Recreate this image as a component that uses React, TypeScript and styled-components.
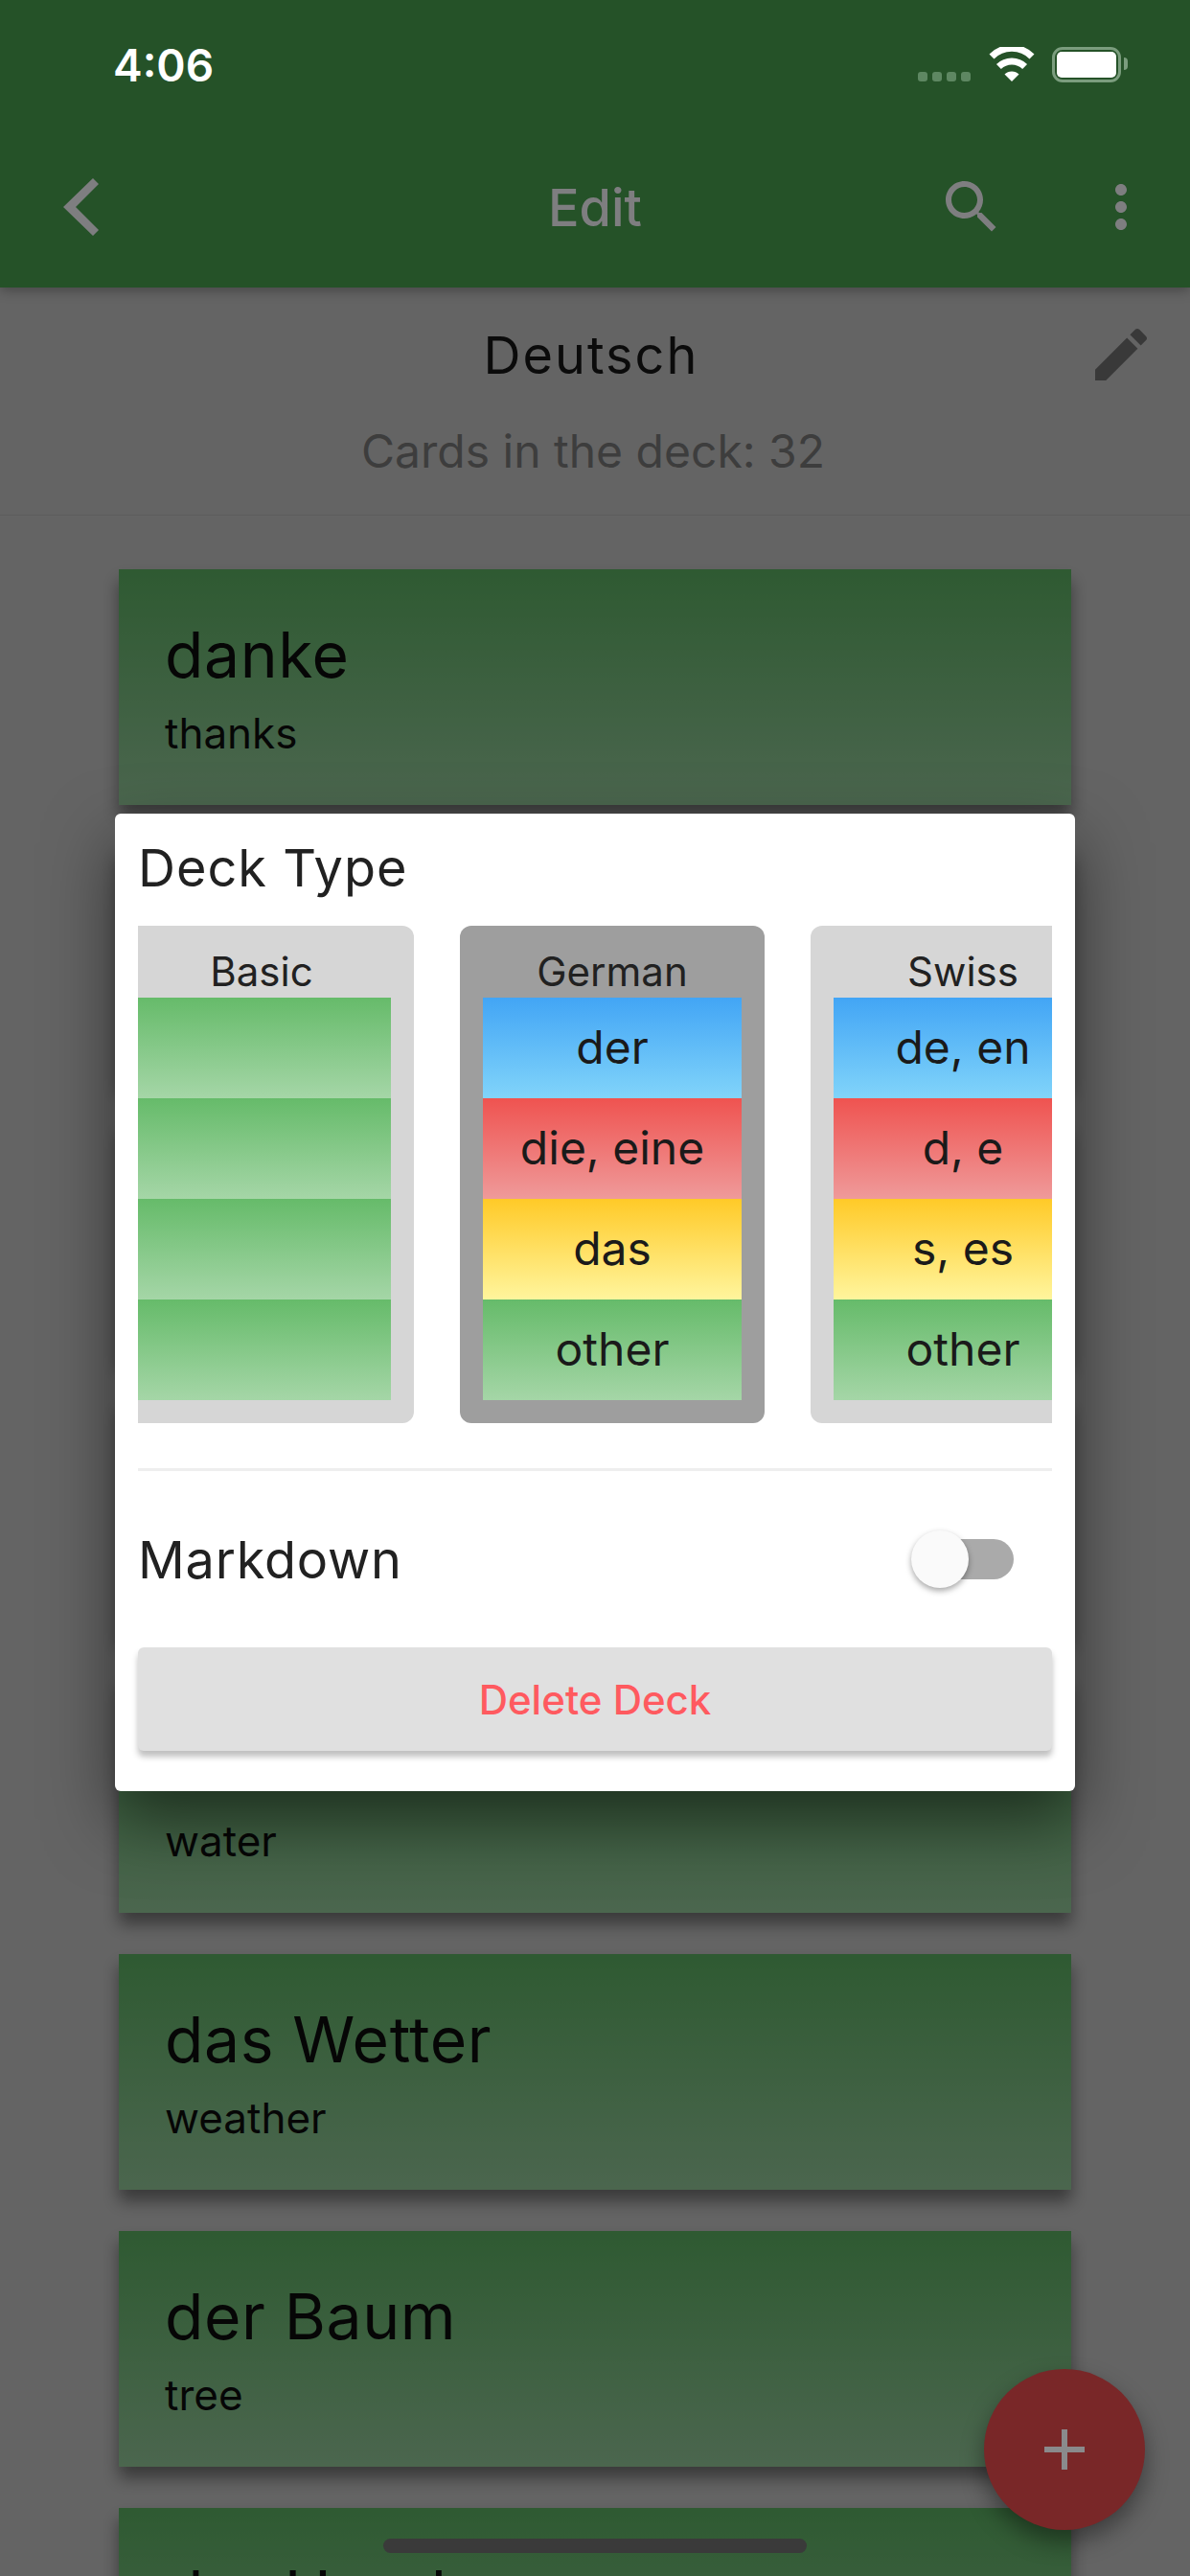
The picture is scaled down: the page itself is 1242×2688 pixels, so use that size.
import React from "react";
import styled, { createGlobalStyle } from "styled-components";

const GlobalStyle = createGlobalStyle`
  html, body {
    margin: 0;
    padding: 0;
    background: #646464;
  }
  body {
    font-family: Inter, "Noto Sans", "Liberation Sans", sans-serif;
    color: #111;
  }
`;

const bandColors = {
  blue: "linear-gradient(#42a5f5, #81d4fa)",
  red: "linear-gradient(#ef5350, #ef9a9a)",
  yellow: "linear-gradient(#ffca28, #fff59d)",
  green: "linear-gradient(#66bb6a, #a5d6a7)",
};

type Tone = keyof typeof bandColors;

const deckTypes: {
  name: string;
  selected?: boolean;
  bands: { tone: Tone; label?: string }[];
}[] = [
  {
    name: "Basic",
    bands: [{ tone: "green" }, { tone: "green" }, { tone: "green" }, { tone: "green" }],
  },
  {
    name: "German",
    selected: true,
    bands: [
      { tone: "blue", label: "der" },
      { tone: "red", label: "die, eine" },
      { tone: "yellow", label: "das" },
      { tone: "green", label: "other" },
    ],
  },
  {
    name: "Swiss",
    bands: [
      { tone: "blue", label: "de, en" },
      { tone: "red", label: "d, e" },
      { tone: "yellow", label: "s, es" },
      { tone: "green", label: "other" },
    ],
  },
];

// cards 2-4 sit fully behind the dialog
const cards: { word?: string; meaning?: string }[] = [
  { word: "danke", meaning: "thanks" },
  {},
  {},
  {},
  { meaning: "water" },
  { word: "das Wetter", meaning: "weather" },
  { word: "der Baum", meaning: "tree" },
  { word: "der Hund" },
];

const App: React.FunctionComponent = () => {
  return (
    <Screen>
      <GlobalStyle />
      <AppBar>
        <StatusBar>
          <Clock>4:06</Clock>
          <StatusIcons>
            <SignalDots>
              <SignalDot />
              <SignalDot />
              <SignalDot />
              <SignalDot />
            </SignalDots>
            <svg width="48" height="36" viewBox="0 0 48 36">
              <path d="M3 13.5A29.5 29.5 0 0 1 45 13.5" fill="none" stroke="#fff" strokeWidth="7" transform="translate(0 -3.5)" />
              <path d="M10.4 21.6A19.5 19.5 0 0 1 37.6 21.6" fill="none" stroke="#fff" strokeWidth="7" transform="translate(0 -1)" />
              <path d="M16.5 28.5A10.6 10.6 0 0 1 31.5 28.5L24 36Z" fill="#fff" />
            </svg>
            <Battery>
              <BatteryFill />
            </Battery>
          </StatusIcons>
        </StatusBar>
        <Toolbar>
          <BackButton>
            <svg width="37" height="60" viewBox="0 0 37 60">
              <path d="M31 0L37 6L13 30L37 54L31 60L0 30Z" fill="#7e7e80" />
            </svg>
          </BackButton>
          <BarTitle>Edit</BarTitle>
          <BarActions>
            <svg width="72" height="72" viewBox="0 0 24 24" fill="#7e7e80">
              <path d="M15.5 14h-.79l-.28-.27C15.41 12.59 16 11.11 16 9.5 16 5.91 13.09 3 9.5 3S3 5.91 3 9.5 5.91 16 9.5 16c1.61 0 3.09-.59 4.23-1.57l.27.28v.79l5 4.99L20.49 19l-4.99-5zm-6 0C7.01 14 5 11.99 5 9.5S7.01 5 9.5 5 14 7.01 14 9.5 11.99 14 9.5 14z" />
            </svg>
            <svg width="72" height="72" viewBox="0 0 24 24" fill="#7e7e80">
              <path d="M12 8c1.1 0 2-.9 2-2s-.9-2-2-2-2 .9-2 2 .9 2 2 2zm0 2c-1.1 0-2 .9-2 2s.9 2 2 2 2-.9 2-2-.9-2-2-2zm0 6c-1.1 0-2 .9-2 2s.9 2 2 2 2-.9 2-2-.9-2-2-2z" />
            </svg>
          </BarActions>
        </Toolbar>
      </AppBar>

      <Body>
        <DeckHeader>
          <DeckTitleRow>
            <DeckName>Deutsch</DeckName>
            <PencilSlot>
              <svg width="72" height="72" viewBox="0 0 24 24" fill="#8f8f8f">
                <path d="M3 17.25V21h3.75L17.81 9.94l-3.75-3.75L3 17.25zM20.71 7.04c.39-.39.39-1.02 0-1.41l-2.34-2.34c-.39-.39-1.02-.39-1.41 0l-1.83 1.83 3.75 3.75 1.83-1.83z" />
              </svg>
            </PencilSlot>
          </DeckTitleRow>
          <DeckCount>Cards in the deck: 32</DeckCount>
        </DeckHeader>
        <CardList>
          {cards.map((card, i) => (
            <WordCard key={i}>
              <Word>{card.word}</Word>
              <Meaning>{card.meaning}</Meaning>
            </WordCard>
          ))}
        </CardList>

        <Scrim>
          <Dialog>
            <DialogTitle>Deck Type</DialogTitle>
            <Carousel>
              <CarouselTrack>
                {deckTypes.map((type) => (
                  <TypeCard key={type.name} $selected={type.selected}>
                    <TypeName>{type.name}</TypeName>
                    <Bands>
                      {type.bands.map((band, i) => (
                        <Band key={i} $tone={band.tone}>
                          {band.label}
                        </Band>
                      ))}
                    </Bands>
                  </TypeCard>
                ))}
              </CarouselTrack>
            </Carousel>
            <Divider />
            <SettingRow>
              <SettingLabel>Markdown</SettingLabel>
              <SwitchTrack>
                <SwitchThumb />
              </SwitchTrack>
            </SettingRow>
            <DeleteButton>Delete Deck</DeleteButton>
          </Dialog>
        </Scrim>
      </Body>

      <Fab>
        <svg width="42" height="42" viewBox="0 0 42 42" fill="#8a8a8c">
          <path d="M18 0h6v18h18v6H24v18h-6V24H0v-6h18z" />
        </svg>
      </Fab>
      <HomeIndicator />
    </Screen>
  );
};
export default App;

const Screen = styled.main`
  position: relative;
  display: flex;
  flex-direction: column;
  width: 1242px;
  height: 2688px;
  overflow: hidden;
  background: #fafafa;
`;

const AppBar = styled.header`
  position: relative;
  z-index: 2;
  display: flex;
  flex-direction: column;
  height: 300px;
  background: #255228;
  box-shadow: 0 3px 12px rgba(0, 0, 0, 0.3);
`;
const StatusBar = styled.div`
  display: flex;
  align-items: flex-start;
  justify-content: space-between;
  height: 132px;
  padding: 40px 72px 0 118px;
  box-sizing: border-box;
`;
const Clock = styled.span`
  font-size: 46px;
  line-height: 56px;
  font-weight: 600;
  color: #fff;
`;
const StatusIcons = styled.div`
  display: flex;
  align-items: flex-start;
  gap: 18px;
  padding-top: 9px;
`;
const SignalDots = styled.div`
  display: flex;
  gap: 5px;
  padding-top: 26px;
  margin-right: 1px;
`;
const SignalDot = styled.i`
  display: block;
  width: 10px;
  height: 10px;
  border-radius: 3px;
  background: #5e8762;
`;
const Battery = styled.div`
  position: relative;
  width: 72px;
  height: 37px;
  padding: 5px;
  box-sizing: border-box;
  border: 3px solid #7b9d7e;
  border-radius: 11px;
  &::after {
    content: "";
    position: absolute;
    top: 8px;
    right: -10px;
    width: 4px;
    height: 13px;
    background: #7b9d7e;
    border-radius: 0 4px 4px 0;
  }
`;
const BatteryFill = styled.div`
  width: 100%;
  height: 100%;
  margin: -3px;
  padding: 3px;
  box-sizing: content-box;
  background: #fff;
  border-radius: 5px;
`;

const Toolbar = styled.div`
  display: grid;
  grid-template-columns: 1fr auto 1fr;
  align-items: center;
  height: 168px;
  padding: 0 36px 0 66px;
`;
const BackButton = styled.div`
  display: flex;
`;
const BarTitle = styled.h1`
  margin: 0;
  font-size: 54px;
  font-weight: 500;
  color: #7e7e80;
  transform: translateX(-15px);
`;
const BarActions = styled.div`
  display: flex;
  justify-content: flex-end;
  gap: 84px;
`;

const Body = styled.div`
  position: relative;
  flex: 1;
  min-height: 0;
`;
const DeckHeader = styled.section`
  display: flex;
  flex-direction: column;
  align-items: center;
  height: 238px;
  box-sizing: border-box;
  border-bottom: 1px solid #e6e6e6;
`;
const DeckTitleRow = styled.div`
  display: grid;
  grid-template-columns: 1fr auto 1fr;
  align-items: center;
  width: 100%;
  height: 72px;
  margin-top: 34px;
  padding: 0 36px 0 28px;
  box-sizing: border-box;
`;
const DeckName = styled.h2`
  grid-column: 2;
  margin: 0;
  font-size: 54px;
  font-weight: 400;
  letter-spacing: 2px;
  color: #1c1c1c;
`;
const PencilSlot = styled.div`
  display: flex;
  justify-content: flex-end;
`;
const DeckCount = styled.p`
  margin: 37px 0 0 -4px;
  font-size: 48px;
  line-height: 56px;
  color: #999;
`;

const CardList = styled.section`
  display: flex;
  flex-direction: column;
  gap: 43px;
  padding: 56px 124px 0;
`;
const WordCard = styled.article`
  flex: none;
  height: 246px;
  padding: 51px 48px 0;
  box-sizing: border-box;
  background: linear-gradient(#75e17d, #bcffc4);
  box-shadow: 0 12px 16px rgba(0, 0, 0, 0.42);
`;
const Word = styled.div`
  height: 76px;
  font-size: 66px;
  line-height: 76px;
  letter-spacing: 0.6px;
  color: #111;
`;
const Meaning = styled.div`
  margin-top: 19px;
  font-size: 44px;
  line-height: 50px;
  color: #111;
`;

const Scrim = styled.div`
  position: absolute;
  inset: 0;
  z-index: 1;
  display: flex;
  justify-content: center;
  align-items: flex-start;
  padding-top: 549px;
  background: rgba(0, 0, 0, 0.6);
`;
const Dialog = styled.div`
  display: flex;
  flex-direction: column;
  width: 1002px;
  height: 1020px;
  padding: 24px;
  box-sizing: border-box;
  background: #fff;
  border-radius: 6px;
  box-shadow: 0 30px 70px rgba(0, 0, 0, 0.5);
`;
const DialogTitle = styled.h3`
  margin: 0;
  font-size: 54px;
  line-height: 66px;
  font-weight: 400;
  letter-spacing: 1px;
  color: #212121;
`;
const Carousel = styled.div`
  margin-top: 27px;
  overflow: hidden;
`;
const CarouselTrack = styled.div`
  display: flex;
  gap: 48px;
  margin-left: -30px;
`;
const TypeCard = styled.div<{ $selected?: boolean }>`
  flex: none;
  display: flex;
  flex-direction: column;
  width: 318px;
  height: 519px;
  padding: 0 24px 24px;
  box-sizing: border-box;
  background: ${(p) => (p.$selected ? "#9e9e9e" : "#d6d6d6")};
  border-radius: 12px;
`;
const TypeName = styled.div`
  height: 75px;
  padding-top: 23px;
  box-sizing: border-box;
  font-size: 42px;
  line-height: 50px;
  text-align: center;
  color: #212121;
`;
const Bands = styled.div`
  display: flex;
  flex-direction: column;
`;
const Band = styled.div<{ $tone: Tone }>`
  display: flex;
  align-items: center;
  justify-content: center;
  height: 105px;
  padding-bottom: 2px;
  box-sizing: border-box;
  font-size: 48px;
  color: #1a1a1a;
  background: ${(p) => bandColors[p.$tone]};
`;
const Divider = styled.hr`
  width: 100%;
  height: 3px;
  margin: 47px 0 0;
  border: 0;
  background: #eeeeee;
`;
const SettingRow = styled.div`
  display: flex;
  align-items: center;
  justify-content: space-between;
  height: 184px;
  padding-right: 40px;
`;
const SettingLabel = styled.span`
  font-size: 54px;
  letter-spacing: 0.8px;
  color: #212121;
`;
const SwitchTrack = styled.div`
  position: relative;
  width: 99px;
  height: 42px;
  background: #aaaaaa;
  border-radius: 21px;
`;
const SwitchThumb = styled.div`
  position: absolute;
  top: -9px;
  left: -8px;
  width: 60px;
  height: 60px;
  background: #fafafa;
  border-radius: 50%;
  box-shadow: 0 3px 6px rgba(0, 0, 0, 0.35);
`;
const DeleteButton = styled.button`
  height: 108px;
  padding: 0;
  border: 0;
  border-radius: 6px;
  font-family: inherit;
  font-size: 42px;
  font-weight: 500;
  color: #ff5a5f;
  background: #e0e0e0;
  box-shadow: 0 6px 6px rgba(0, 0, 0, 0.25);
`;

const Fab = styled.div`
  position: absolute;
  z-index: 3;
  left: 1027px;
  top: 2472px;
  display: flex;
  align-items: center;
  justify-content: center;
  width: 168px;
  height: 168px;
  border-radius: 50%;
  background: #792728;
  box-shadow: 0 12px 24px rgba(0, 0, 0, 0.4);
`;
const HomeIndicator = styled.div`
  position: absolute;
  z-index: 4;
  left: 400px;
  top: 2649px;
  width: 442px;
  height: 15px;
  border-radius: 8px;
  background: #3a3a3a;
`;
